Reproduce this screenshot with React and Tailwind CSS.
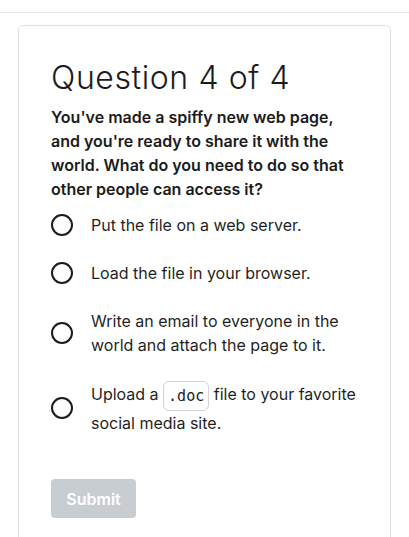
export default function App() {
  const options = [
    { id: 1, content: <>Put the file on a web server.</> },
    { id: 2, content: <>Load the file in your browser.</> },
    { id: 3, content: <>Write an email to everyone in the world and attach the page to it.</> },
    {
      id: 4,
      content: (
        <>
          Upload a{" "}
          <code className="inline-block rounded-md border border-[#d4d4d4] bg-white px-[4px] py-[3px] align-middle font-['DejaVu_Sans_Mono',monospace] text-[15px] leading-[22px] text-[#1b1b1b]">
            .doc
          </code>{" "}
          file to your favorite social media site.
        </>
      ),
    },
  ];
  return (
    <div className="min-h-screen bg-white font-['Inter',sans-serif] text-[#1b1b1b]">
      <div className="h-[13px] border-b border-[#e6e6e6]" />
      <div className="mx-[18px] mt-3 rounded-[5px] border border-[#e0e0e0] px-8 pb-10 pt-8">
        <h1 className="text-[32px] font-light leading-[40px] tracking-[0.6px] text-[#1b1b1b]">
          Question 4 of 4
        </h1>
        <p className="mt-[7px] text-[16px] font-semibold leading-6">
          You've made a spiffy new web page, and you're ready to share it with the world. What do you need to do so that other people can access it?
        </p>
        <div className="mt-3 flex flex-col gap-6">
          {options.map((o) => (
            <label key={o.id} className="flex items-center gap-[18px]">
              <span className="block h-[22px] w-[22px] shrink-0 rounded-full border-2 border-[#1b1b1b]" />
              <span className="text-[16px] leading-6 text-[#1f1f1f]">{o.content}</span>
            </label>
          ))}
        </div>
        <button className="mt-[44px] h-[39px] w-[85px] rounded-[4px] bg-[#c8cdd2] text-[16px] font-semibold text-white">
          Submit
        </button>
      </div>
    </div>
  );
}
